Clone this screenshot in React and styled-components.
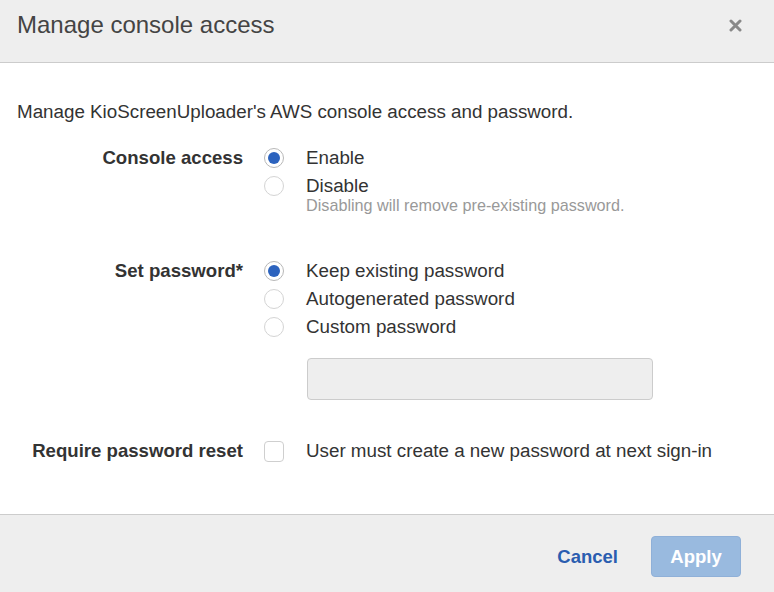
import styled, { createGlobalStyle } from "styled-components";

const GlobalStyle = createGlobalStyle`
  html, body {
    margin: 0;
    padding: 0;
    background: #fff;
  }
  body {
    font-family: "Liberation Sans", Arial, Helvetica, sans-serif;
    color: #333;
  }
`;

const Dialog = styled.div`
  width: 774px;
  height: 592px;
  display: flex;
  flex-direction: column;
  background: #fff;
`;

const Header = styled.div`
  height: 63px;
  box-sizing: border-box;
  border-bottom: 1px solid #cccccc;
  background: #eeeeee;
  display: flex;
  align-items: flex-start;
  justify-content: space-between;
  padding: 11px 32px 0 17px;
`;

const Title = styled.h1`
  margin: 0;
  font-size: 24px;
  font-weight: normal;
  color: #444;
  line-height: 28px;
`;

const Close = styled.button`
  border: none;
  background: none;
  padding: 0;
  margin-top: 8px;
  width: 13px;
  height: 13px;
  display: flex;
  cursor: pointer;
`;

const Body = styled.div`
  flex: 1;
  padding: 39px 17px 0 17px;
  display: flex;
  flex-direction: column;
`;

const Intro = styled.p`
  margin: 0 0 22px 0;
  font-size: 18.8px;
  line-height: 20px;
  color: #333;
`;

const Field = styled.div`
  display: grid;
  grid-template-columns: 226px 1fr;
  column-gap: 21px;
  margin-bottom: ${(p) => p.$gap || 0}px;
`;

const Label = styled.div`
  text-align: right;
  font-weight: bold;
  font-size: 18.6px;
  line-height: 28px;
  color: #333;
  white-space: nowrap;
`;

const Options = styled.div`
  display: flex;
  flex-direction: column;
`;

const Option = styled.label`
  display: grid;
  grid-template-columns: 20px 1fr;
  column-gap: 22px;
  align-items: start;
  font-size: 18.8px;
  line-height: 28px;
  color: #333;
  cursor: pointer;
  white-space: nowrap;
`;

const Radio = styled.span`
  width: 20px;
  height: 20px;
  margin-top: 4px;
  box-sizing: border-box;
  border-radius: 50%;
  border: 1px solid ${(p) => (p.$checked ? "#b8b8b8" : "#d4d4d4")};
  background: #fff;
  display: flex;
  align-items: center;
  justify-content: center;

  &::after {
    content: "";
    display: ${(p) => (p.$checked ? "block" : "none")};
    width: 12px;
    height: 12px;
    border-radius: 50%;
    background: #2c63be;
  }
`;

const Check = styled.span`
  width: 20px;
  height: 21px;
  margin-top: 4px;
  box-sizing: border-box;
  border-radius: 4px;
  border: 1px solid #cfcfcf;
  background: #fff;
`;

const Hint = styled.div`
  font-size: 16.2px;
  line-height: 16px;
  color: #999;
  margin-top: -3px;
`;

const TextInput = styled.input`
  margin: 17px 0 0 43px;
  width: 346px;
  height: 42px;
  box-sizing: border-box;
  border: 1px solid #cccccc;
  border-radius: 4px;
  background: #eeeeee;
  font-size: 16px;
  padding: 0 10px;
`;

const Footer = styled.div`
  height: 78px;
  box-sizing: border-box;
  border-top: 1px solid #cccccc;
  background: #eeeeee;
  display: flex;
  align-items: flex-start;
  justify-content: flex-end;
  padding: 21px 33px 0 0;
  gap: 33px;
`;

const LinkButton = styled.button`
  border: none;
  background: none;
  padding: 0;
  height: 41px;
  font-family: inherit;
  font-size: 18.5px;
  font-weight: bold;
  color: #2a5db0;
  cursor: pointer;
`;

const PrimaryButton = styled.button`
  width: 90px;
  height: 41px;
  border: 1px solid #8fb0d8;
  border-radius: 4px;
  background: #99badf;
  color: #fff;
  font-family: inherit;
  font-size: 18.5px;
  font-weight: bold;
  cursor: default;
`;

const CloseIcon = () => (
  <svg width="13" height="13" viewBox="0 0 13 13">
    <path d="M2 2 L11 11 M11 2 L2 11" stroke="#888" strokeWidth="3" strokeLinecap="round" />
  </svg>
);

export default function App() {
  return (
    <>
      <GlobalStyle />
      <Dialog>
        <Header>
          <Title>Manage console access</Title>
          <Close aria-label="Close">
            <CloseIcon />
          </Close>
        </Header>
        <Body>
          <Intro>Manage KioScreenUploader's AWS console access and password.</Intro>

          <Field $gap={44}>
            <Label>Console access</Label>
            <Options>
              <Option>
                <Radio $checked />
                <span>Enable</span>
              </Option>
              <Option>
                <Radio />
                <div>
                  <div>Disable</div>
                  <Hint>Disabling will remove pre-existing password.</Hint>
                </div>
              </Option>
            </Options>
          </Field>

          <Field $gap={37}>
            <Label>Set password*</Label>
            <Options>
              <Option>
                <Radio $checked />
                <span>Keep existing password</span>
              </Option>
              <Option>
                <Radio />
                <span>Autogenerated password</span>
              </Option>
              <Option>
                <Radio />
                <span>Custom password</span>
              </Option>
              <TextInput type="password" disabled />
            </Options>
          </Field>

          <Field>
            <Label>Require password reset</Label>
            <Option>
              <Check />
              <span>User must create a new password at next sign-in</span>
            </Option>
          </Field>
        </Body>
        <Footer>
          <LinkButton>Cancel</LinkButton>
          <PrimaryButton disabled>Apply</PrimaryButton>
        </Footer>
      </Dialog>
    </>
  );
}
